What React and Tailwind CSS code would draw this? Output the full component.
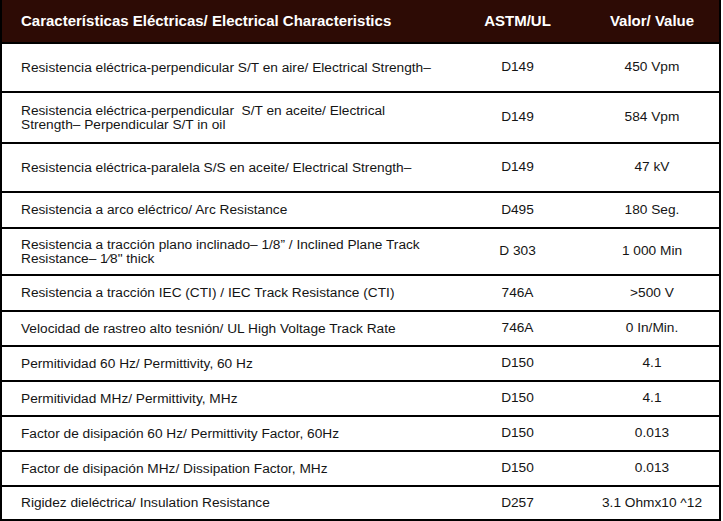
const rows = [
  { h: 'h-[49px]', name: ['Resistencia eléctrica-perpendicular S/T en aire/ Electrical Strength–'], astm: 'D149', value: '450 Vpm' },
  { h: 'h-[51px]', name: ['Resistencia eléctrica-perpendicular  S/T en aceite/ Electrical', 'Strength– Perpendicular S/T in oil'], astm: 'D149', value: '584 Vpm' },
  { h: 'h-[49px]', name: ['Resistencia eléctrica-paralela S/S en aceite/ Electrical Strength–'], astm: 'D149', value: '47 kV' },
  { h: 'h-[36px]', name: ['Resistencia a arco eléctrico/ Arc Resistance'], astm: 'D495', value: '180 Seg.' },
  { h: 'h-[47px]', name: ['Resistencia a tracción plano inclinado– 1/8” / Inclined Plane Track', 'Resistance– 1⁄8" thick'], astm: 'D 303', value: '1 000 Min' },
  { h: 'h-[36px]', name: ['Resistencia a tracción IEC (CTI) / IEC Track Resistance (CTI)'], astm: '746A', value: '>500 V' },
  { h: 'h-[35px]', name: ['Velocidad de rastreo alto tesnión/ UL High Voltage Track Rate'], astm: '746A', value: '0 In/Min.' },
  { h: 'h-[35px]', name: ['Permitividad 60 Hz/ Permittivity, 60 Hz'], astm: 'D150', value: '4.1' },
  { h: 'h-[35px]', name: ['Permitividad MHz/ Permittivity, MHz'], astm: 'D150', value: '4.1' },
  { h: 'h-[35px]', name: ['Factor de disipación 60 Hz/ Permittivity Factor, 60Hz'], astm: 'D150', value: '0.013' },
  { h: 'h-[35px]', name: ['Factor de disipación MHz/ Dissipation Factor, MHz'], astm: 'D150', value: '0.013' },
  { h: 'h-[34px]', name: ['Rigidez dieléctrica/ Insulation Resistance'], astm: 'D257', value: '3.1 Ohmx10 ^12' },
];

export default function App() {
  return (
    <div className="w-[723px] h-[521px] bg-white font-['Liberation_Sans',Arial,sans-serif] text-[13.7px] text-[#151515]">
      <div className="w-[721px] border-x-2 border-b-2 border-black">
        {/* encabezado */}
        <div className="flex items-center h-[42px] bg-[#2d0b05] text-white font-bold text-[15px]">
          <div className="w-[448px] pl-[19px]">Características Eléctricas/ Electrical Characteristics</div>
          <div className="w-[135px] text-center">ASTM/UL</div>
          <div className="flex-1 text-center">Valor/ Value</div>
        </div>

        {rows.map((r, i) => (
          <div key={i} className={`flex items-center border-t-2 border-black ${r.h}`}>
            <div className="w-[448px] pl-[19px] leading-[14px] whitespace-pre">
              {r.name.map((line, j) => (
                <div key={j}>{line}</div>
              ))}
            </div>
            <div className="w-[135px] text-center">{r.astm}</div>
            <div className="flex-1 text-center">{r.value}</div>
          </div>
        ))}
      </div>
    </div>
  );
}
